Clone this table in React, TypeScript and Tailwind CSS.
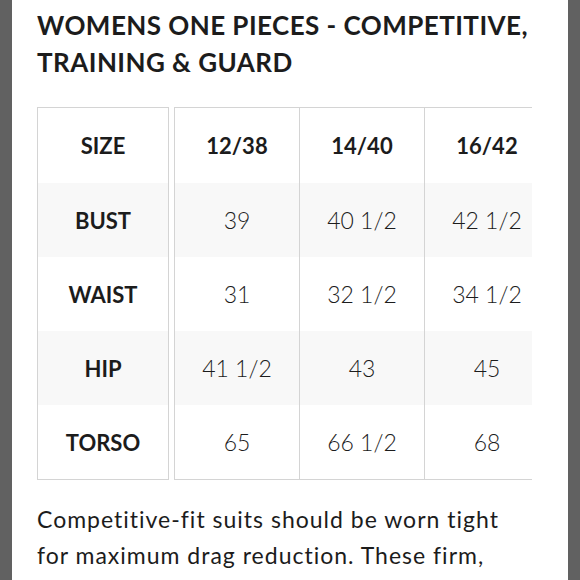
import React from "react";

const cols = ["12/38", "14/40", "16/42"];
const rows: { label: string; vals: string[] }[] = [
  { label: "BUST", vals: ["39", "40 1/2", "42 1/2"] },
  { label: "WAIST", vals: ["31", "32 1/2", "34 1/2"] },
  { label: "HIP", vals: ["41 1/2", "43", "45"] },
  { label: "TORSO", vals: ["65", "66 1/2", "68"] },
];

const font = { fontFamily: "Lato, 'Open Sans', sans-serif" };

export default function App() {
  return (
    <div className="w-[580px] h-[580px] bg-[#616161] overflow-hidden" style={font}>
      <div className="ml-[12px] w-[556px] h-full bg-white pl-[25px] overflow-hidden text-[#1c1c1c]">
        <h1 className="pt-[7px] text-[26px] leading-[37px] font-bold tracking-[0.45px]">
          <span className="block whitespace-nowrap">WOMENS ONE PIECES - COMPETITIVE,</span>
          <span className="block whitespace-nowrap">TRAINING &amp; GUARD</span>
        </h1>
        <div className="mt-[26px] flex w-[495px] overflow-hidden">
          <div className="w-[132px] shrink-0 border border-[#d4d4d4]">
            <div className="h-[75px] flex items-center justify-center text-[22px] font-bold">SIZE</div>
            {rows.map((r, i) => (
              <div
                key={r.label}
                className={`h-[74px] flex items-center justify-center text-[22px] font-bold ${i % 2 === 0 ? "bg-[#f8f8f8]" : "bg-white"}`}
              >
                {r.label}
              </div>
            ))}
          </div>
          <div className="ml-[5px] flex shrink-0 border-t border-b border-[#d4d4d4]">
            {cols.map((c, ci) => (
              <div key={c} className="w-[125px] shrink-0 border-l border-[#d4d4d4]">
                <div className="h-[75px] flex items-center justify-center text-[22px] font-bold">{c}</div>
                {rows.map((r, i) => (
                  <div
                    key={r.label}
                    className={`h-[74px] flex items-center justify-center text-[23px] font-light ${i % 2 === 0 ? "bg-[#f8f8f8]" : "bg-white"}`}
                  >
                    {r.vals[ci]}
                  </div>
                ))}
              </div>
            ))}
          </div>
        </div>
        <p className="mt-[21px] text-[23px] leading-[36px] tracking-[1px]">
          <span className="block whitespace-nowrap">Competitive-fit suits should be worn tight</span>
          <span className="block whitespace-nowrap">for maximum drag reduction. These firm,</span>
        </p>
      </div>
    </div>
  );
}
